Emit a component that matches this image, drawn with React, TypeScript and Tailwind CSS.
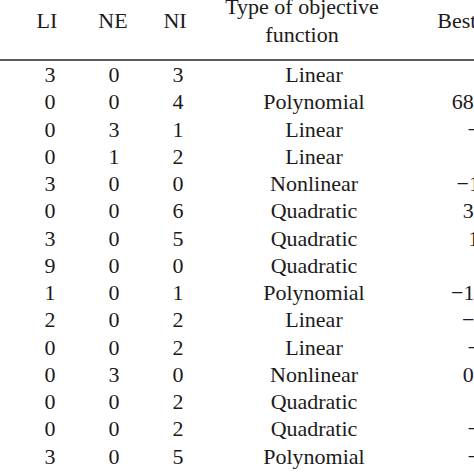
import React from 'react';

type Row = { li: number; ne: number; ni: number; kind: string; best: string };

const rows: Row[] = [
  { li: 3, ne: 0, ni: 3, kind: 'Linear', best: '7.0000' },
  { li: 0, ne: 0, ni: 4, kind: 'Polynomial', best: '680.630057' },
  { li: 0, ne: 3, ni: 1, kind: 'Linear', best: '−5.5080' },
  { li: 0, ne: 1, ni: 2, kind: 'Linear', best: '2.124' },
  { li: 3, ne: 0, ni: 0, kind: 'Nonlinear', best: '−1.905155' },
  { li: 0, ne: 0, ni: 6, kind: 'Quadratic', best: '32.21680' },
  { li: 3, ne: 0, ni: 5, kind: 'Quadratic', best: '1.07650' },
  { li: 9, ne: 0, ni: 0, kind: 'Quadratic', best: '−15' },
  { li: 1, ne: 0, ni: 1, kind: 'Polynomial', best: '−1.8477636' },
  { li: 2, ne: 0, ni: 2, kind: 'Linear', best: '−24.3062' },
  { li: 0, ne: 0, ni: 2, kind: 'Linear', best: '−6.9618' },
  { li: 0, ne: 3, ni: 0, kind: 'Nonlinear', best: '0.053950' },
  { li: 0, ne: 0, ni: 2, kind: 'Quadratic', best: '−1' },
  { li: 0, ne: 0, ni: 2, kind: 'Quadratic', best: '−0.7500' },
  { li: 3, ne: 0, ni: 5, kind: 'Polynomial', best: '−2.5000' },
];

export default function App() {
  return (
    <div
      className="w-[474px] h-[474px] overflow-hidden bg-white text-[#1c1a1a] text-[22px]"
      style={{ fontFamily: '"Liberation Serif", "Times New Roman", serif' }}
    >
      {/* header, top line is cut off by the crop */}
      <div className="-mt-[8px] h-[58px] pl-[15px] grid grid-cols-[64px_68px_56px_198px_188px] items-center justify-items-center leading-[28px] whitespace-nowrap">
        <div>LI</div>
        <div>NE</div>
        <div>NI</div>
        <div className="text-center">
          <div>Type of objective</div>
          <div>function</div>
        </div>
        <div>Best solution</div>
      </div>

      <div className="mt-[9px] h-[2px] w-[600px] bg-[#5a5a5a]" />

      <div className="flex flex-col">
        {rows.map((r, i) => (
          <div
            key={i}
            className="h-[27.25px] leading-[27.25px] pl-[18px] grid grid-cols-[64px_64px_64px_208px_172px] justify-items-center whitespace-nowrap"
          >
            <div>{r.li}</div>
            <div>{r.ne}</div>
            <div>{r.ni}</div>
            <div>{r.kind}</div>
            <div>{r.best}</div>
          </div>
        ))}
      </div>
    </div>
  );
}
